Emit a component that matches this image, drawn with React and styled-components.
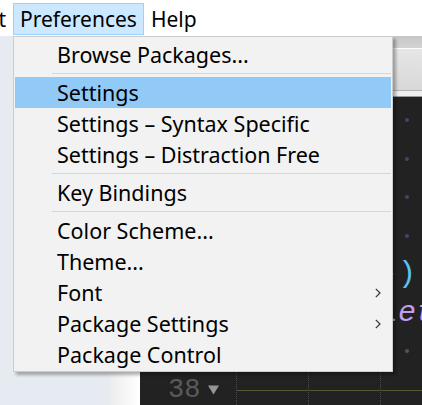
import styled, { createGlobalStyle } from "styled-components";

const GlobalStyle = createGlobalStyle`
  html, body {
    margin: 0;
    padding: 0;
    overflow: hidden;
    background: #fff;
  }
  body {
    font-family: "Noto Sans", "Open Sans", sans-serif;
  }
`;

const Window = styled.div`
  position: relative;
  width: 422px;
  height: 405px;
  overflow: hidden;
  display: flex;
  flex-direction: column;
`;

const MenuBar = styled.div`
  height: 36px;
  flex: none;
  display: flex;
  align-items: flex-start;
  background: #fff;
`;

const MenuTitle = styled.div`
  position: relative;
  box-sizing: border-box;
  height: 32px;
  margin-top: 3px;
  padding: 0 6px;
  display: flex;
  align-items: center;
  border: 1px solid ${(p) => (p.$open ? "#99d1ff" : "transparent")};
  background: ${(p) => (p.$open ? "#cce8ff" : "transparent")};
  font-size: 21px;
  color: #000;
  white-space: nowrap;
`;

// menu bar is scrolled: only the tail of this title shows
const ClippedTitle = styled(MenuTitle)`
  width: 13px;
  padding-left: 0;
  border-left: 0;
  overflow: hidden;
  justify-content: flex-end;
`;

const Dropdown = styled.div`
  position: absolute;
  top: calc(100% + 2px);
  left: -1px;
  z-index: 10;
  width: 380px;
  box-sizing: border-box;
  padding: 2px 1px 1px;
  display: flex;
  flex-direction: column;
  background: #f2f2f2;
  border: 1px solid #cccccc;
  box-shadow: 3px 3px 3px rgba(0, 0, 0, 0.3);
`;

const Item = styled.div`
  height: 31px;
  display: flex;
  align-items: center;
  padding: 0 10px 0 42px;
  background: ${(p) => (p.$active ? "#91c9f7" : "transparent")};
  font-size: 21.5px;
  color: #000;
  white-space: nowrap;
`;

const Label = styled.span`
  flex: 1;
`;

const Separator = styled.div`
  height: 1px;
  margin: 3px 0 3px 37px;
  background: #d7d7d7;
`;

const Chevron = () => (
  <svg width="6" height="10" viewBox="0 0 6 10">
    <polyline points="0.8,0.8 5,5 0.8,9.2" fill="none" stroke="#333" strokeWidth="1.2" />
  </svg>
);

const Workspace = styled.div`
  flex: 1;
  min-height: 0;
  display: flex;
`;

const Sidebar = styled.div`
  width: 110px;
  flex: none;
  background: #e6eaf1;
`;

const SidebarEdge = styled.div`
  width: 30px;
  flex: none;
  background: linear-gradient(to right, #ececec, #fbfbfb 80%, #ffffff);
`;

const Editor = styled.div`
  flex: 1;
  min-width: 0;
  display: flex;
  flex-direction: column;
  background: #222222;
`;

const TabBar = styled.div`
  height: 61px;
  flex: none;
  background: linear-gradient(
    to bottom,
    #c6c6c6 0,
    #d3d3d3 12px,
    #fdfdfd 12px,
    #fdfdfd 13px,
    #e6e6e6 13px,
    #d8d8d8 54px,
    #b2b2b2 54px,
    #b2b2b2 55px,
    #efefef 55px,
    #efefef 60px,
    #9a9a9a 60px
  );
`;

const CodeArea = styled.div`
  flex: 1;
  min-height: 0;
  overflow: hidden;
  padding-top: 4px;
  font-family: "Liberation Mono", "DejaVu Sans Mono", monospace;
`;

const Line = styled.div`
  height: 38.5px;
  display: flex;
  align-items: stretch;
`;

const Gutter = styled.div`
  width: 96px;
  flex: none;
  box-sizing: border-box;
  padding-left: 28px;
  display: flex;
  align-items: center;
  gap: 8px;
  font-size: 27px;
  color: #5a5a5a;
`;

const Num = styled.span`
  width: 32px;
`;

const Fold = () => (
  <svg width="11" height="10" viewBox="0 0 11 10">
    <polygon points="0,0.5 11,0.5 5.5,9.5" fill="#959595" />
  </svg>
);

const Code = styled.div`
  flex: 1;
  display: flex;
  align-items: center;
  font-size: 30px;
  white-space: pre;
  color: #d4d4d4;
  background: ${(p) =>
    p.$underline
      ? "linear-gradient(to bottom, transparent 19px, #4f5c2f 19px, #4f5c2f 20px, transparent 20px)"
      : "none"};
`;

const Indent = styled.span`
  align-self: stretch;
  width: 4ch;
  flex: none;
  box-sizing: border-box;
  border-left: 1px dotted #4a4a4a;
`;

const Blank = styled.span`
  width: 1ch;
  flex: none;
`;

const Dot = styled.span`
  width: 1ch;
  flex: none;
  display: flex;
  justify-content: center;
  &::before {
    content: "";
    width: 4px;
    height: 4px;
    border-radius: 50%;
    background: ${(p) => p.$color || "#3b4868"};
  }
`;

const Token = styled.span`
  color: ${(p) => p.$color};
  font-style: ${(p) => (p.$italic ? "italic" : "normal")};
`;

const menu = [
  { label: "Browse Packages..." },
  { sep: true },
  { label: "Settings", active: true },
  { label: "Settings – Syntax Specific" },
  { label: "Settings – Distraction Free" },
  { sep: true },
  { label: "Key Bindings" },
  { sep: true },
  { label: "Color Scheme..." },
  { label: "Theme..." },
  { label: "Font", sub: true },
  { label: "Package Settings", sub: true },
  { label: "Package Control" },
];

const lines = [
  { n: 31, body: <><Indent /><Indent /><Blank /><Dot /></> },
  { n: 32, body: <><Indent /><Indent /><Blank /><Dot /></> },
  { n: 33, body: <><Indent /><Indent /><Blank /><Dot /></> },
  { n: 34, body: <><Indent /><Indent /><Blank /><Dot /></> },
  {
    n: 35,
    body: (
      <>
        <Indent />
        <Indent />
        <Token $color="#7fb3c8">-</Token>
        <Token $color="#5cc2f2">)</Token>
      </>
    ),
  },
  {
    n: 36,
    body: (
      <>
        <Indent />
        <Indent />
        <Token $color="#c09cf2" $italic>
          Let
        </Token>
      </>
    ),
  },
  { n: 37, body: <><Indent /><Indent /><Blank /><Dot $color="#555" /></> },
  { n: 38, fold: true, underline: true, body: <><Indent /><Indent /><Indent /></> },
];

const App = () => {
  return (
    <>
      <GlobalStyle />
      <Window>
        <MenuBar>
          <ClippedTitle>Project</ClippedTitle>
          <MenuTitle $open>
            Preferences
            <Dropdown>
              {menu.map((m, i) =>
                m.sep ? (
                  <Separator key={i} />
                ) : (
                  <Item key={i} $active={m.active}>
                    <Label>{m.label}</Label>
                    {m.sub && <Chevron />}
                  </Item>
                )
              )}
            </Dropdown>
          </MenuTitle>
          <MenuTitle>Help</MenuTitle>
        </MenuBar>
        <Workspace>
          <Sidebar />
          <SidebarEdge />
          <Editor>
            <TabBar />
            <CodeArea>
              {lines.map((l) => (
                <Line key={l.n}>
                  <Gutter>
                    <Num>{l.n}</Num>
                    {l.fold && <Fold />}
                  </Gutter>
                  <Code $underline={l.underline}>{l.body}</Code>
                </Line>
              ))}
            </CodeArea>
          </Editor>
        </Workspace>
      </Window>
    </>
  );
};

export default App;
